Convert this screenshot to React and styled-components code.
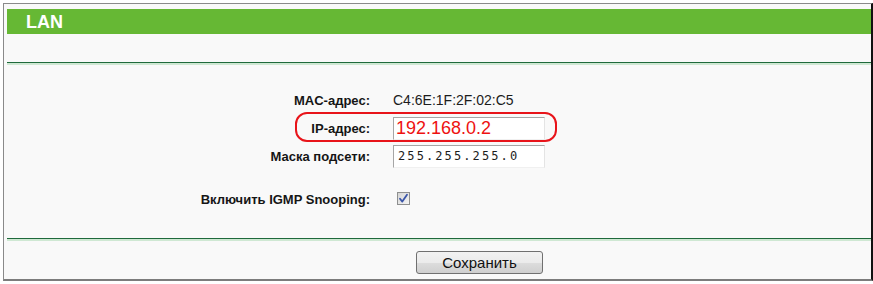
import React from 'react';
import styled, { createGlobalStyle } from 'styled-components';

const GlobalStyle = createGlobalStyle`
  html, body {
    margin: 0;
    padding: 0;
    background: #ffffff;
  }
  body {
    font-family: 'Liberation Sans', Arial, sans-serif;
  }
`;

const Frame = styled.div`
  margin: 3px 0 0 3px;
  width: 864px;
  height: 270px;
  border-left: 1px solid #8a8a8a;
  border-top: 1px solid #8a8a8a;
  border-right: 2px solid #111111;
  border-bottom: 2px solid #7c7c7c;
  background: #f9f9f9;
  padding: 5px 0 0 3px;
  display: flex;
  flex-direction: column;
`;

const Header = styled.div`
  height: 25px;
  background: #66b834;
  color: #ffffff;
  font-size: 18px;
  font-weight: bold;
  display: flex;
  align-items: center;
  padding-left: 19px;
  padding-top: 1px;
  box-sizing: border-box;
`;

const Divider = styled.div`
  height: 1px;
  background: #1f6a3c;
  border-bottom: 2px solid #cfe8d3;
  margin-top: ${p => p.$top}px;
`;

const Form = styled.div`
  display: grid;
  grid-template-columns: 363px 1fr;
  grid-template-rows: 28px 28px 28px 43px;
  column-gap: 23px;
  padding-top: 21px;
`;

const Label = styled.div`
  box-sizing: border-box;
  font-size: 13px;
  font-weight: bold;
  color: #151515;
  text-align: right;
  display: flex;
  align-items: center;
  justify-content: flex-end;
  padding-top: ${p => p.$top || 0}px;
`;

const Value = styled.div`
  box-sizing: border-box;
  position: relative;
  display: flex;
  align-items: center;
  font-size: 14px;
  color: #1c1c1c;
  padding-top: ${p => p.$top || 0}px;
`;

const TextBox = styled.div`
  width: 152px;
  height: 23px;
  box-sizing: border-box;
  background: #ffffff;
  border-top: 1px solid #a6a6a6;
  border-left: 1px solid #a6a6a6;
  border-right: 1px solid #e4e4e4;
  border-bottom: 1px solid #f0f0f0;
  display: flex;
  align-items: center;
  padding-left: ${p => (p.$mono ? 4 : 2)}px;
  font-family: ${p => (p.$mono ? "'DejaVu Sans Mono', monospace" : "'Liberation Sans', Arial, sans-serif")};
  font-size: ${p => (p.$mono ? 12 : 18)}px;
  letter-spacing: ${p => (p.$mono ? 2.1 : 0)}px;
  color: ${p => p.$color || '#1c1c1c'};
`;

const Highlight = styled.div`
  position: absolute;
  left: -98px;
  top: -2px;
  width: 262px;
  height: 30px;
  box-sizing: border-box;
  border: 2.5px solid #e8141a;
  border-radius: 12px;
  pointer-events: none;
`;

const CheckBox = styled.span`
  width: 13px;
  height: 13px;
  box-sizing: border-box;
  margin: -2px 0 0 4px;
  border: 1px solid #8e8f8f;
  background: linear-gradient(135deg, #d6d6d6 0%, #f4f4f4 100%);
  display: flex;
  align-items: center;
  justify-content: center;
`;

const SaveBar = styled.div`
  display: flex;
  padding: 10px 0 0 409px;
`;

const SaveButton = styled.button`
  width: 127px;
  height: 23px;
  box-sizing: border-box;
  border: 1px solid #707070;
  border-radius: 3px;
  background: linear-gradient(#f2f2f2 0%, #ebebeb 50%, #dddddd 51%, #cfcfcf 100%);
  font-family: 'Liberation Sans', Arial, sans-serif;
  font-size: 15px;
  color: #111111;
  padding: 0;
`;

export default function App() {
  return (
    <>
      <GlobalStyle />
      <Frame>
        <Header>LAN</Header>
        <Divider $top={28} />
        <Form>
          <Label>MAC-адрес:</Label>
          <Value>C4:6E:1F:2F:02:C5</Value>

          <Label>IP-адрес:</Label>
          <Value>
            <TextBox $color="#ee1111">192.168.0.2</TextBox>
            <Highlight />
          </Value>

          <Label>Маска подсети:</Label>
          <Value>
            <TextBox $mono>255.255.255.0</TextBox>
          </Value>

          <Label $top={15}>Включить IGMP Snooping:</Label>
          <Value $top={15}>
            <CheckBox>
              <svg width="11" height="11" viewBox="0 0 11 11">
                <path d="M2 5.8 L4.3 8.6 L9 1.8" fill="none" stroke="#3a55a8" strokeWidth="1.8" strokeLinecap="round" strokeLinejoin="round" />
              </svg>
            </CheckBox>
          </Value>
        </Form>
        <Divider $top={25} />
        <SaveBar>
          <SaveButton>Сохранить</SaveButton>
        </SaveBar>
      </Frame>
    </>
  );
}
